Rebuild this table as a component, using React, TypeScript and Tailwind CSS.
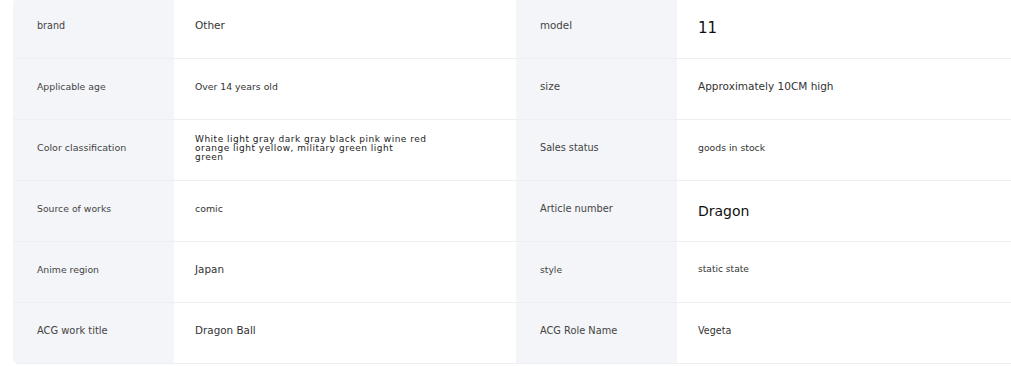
import React from "react";

type Cell = { text: React.ReactNode; cls: string };
type Row = [Cell, Cell, Cell, Cell];

// product parameter rows: label, value, label, value
const rows: Row[] = [
    [
        { text: "brand", cls: "text-[9.6px]" },
        { text: "Other", cls: "text-[10.5px]" },
        { text: "model", cls: "text-[10.3px]" },
        { text: "11", cls: "text-[15px] text-[#111] pt-[5px]" },
    ],
    [
        { text: "Applicable age", cls: "text-[9.3px]" },
        { text: "Over 14 years old", cls: "text-[9.3px]" },
        { text: "size", cls: "text-[10.3px]" },
        { text: "Approximately 10CM high", cls: "text-[10.5px]" },
    ],
    [
        { text: "Color classification", cls: "text-[9.5px]" },
        {
            text: (
                <>
                    White light gray dark gray black pink wine red
                    <br />
                    orange light yellow, military green light
                    <br />
                    green
                </>
            ),
            cls: "block text-[9px] leading-[9px] tracking-[0.5px] text-[#222] pt-[1px]",
        },
        { text: "Sales status", cls: "text-[9.7px]" },
        { text: "goods in stock", cls: "text-[9.3px]" },
    ],
    [
        { text: "Source of works", cls: "text-[9.3px]" },
        { text: "comic", cls: "text-[9.4px]" },
        { text: "Article number", cls: "text-[9.8px]" },
        { text: "Dragon", cls: "text-[14px] text-[#111] pt-[5px]" },
    ],
    [
        { text: "Anime region", cls: "text-[9.3px]" },
        { text: "Japan", cls: "text-[10.4px]" },
        { text: "style", cls: "text-[9.2px]" },
        { text: "static state", cls: "text-[9.1px]" },
    ],
    [
        { text: "ACG work title", cls: "text-[9.9px]" },
        { text: "Dragon Ball", cls: "text-[10.4px]" },
        { text: "ACG Role Name", cls: "text-[9.8px]" },
        { text: "Vegeta", cls: "text-[9.6px]" },
    ],
];

const Label = ({ cell }: { cell: Cell }) => (
    <div className="bg-[#f3f5f8] border-b border-[#edf0f3] flex items-center pl-6 pb-1 text-[#444]">
        <span className={cell.cls}>{cell.text}</span>
    </div>
);

const Value = ({ cell }: { cell: Cell }) => (
    <div className="bg-white border-b border-[#eceef1] flex items-center pl-[21px] pb-1 text-[#333]">
        <span className={cell.cls}>{cell.text}</span>
    </div>
);

const App = () => {
    return (
        <div className="w-full h-[366px] bg-white overflow-hidden font-['DejaVu_Sans',sans-serif]">
            <div className="ml-[13px] -mt-[2px] w-[1006px] rounded-md overflow-hidden">
                <div className="grid grid-cols-[161px_342px_161px_342px] auto-rows-[61px]">
                    {rows.map((r, i) => (
                        <React.Fragment key={i}>
                            <Label cell={r[0]} />
                            <Value cell={r[1]} />
                            <Label cell={r[2]} />
                            <Value cell={r[3]} />
                        </React.Fragment>
                    ))}
                </div>
            </div>
        </div>
    );
};

export default App;
